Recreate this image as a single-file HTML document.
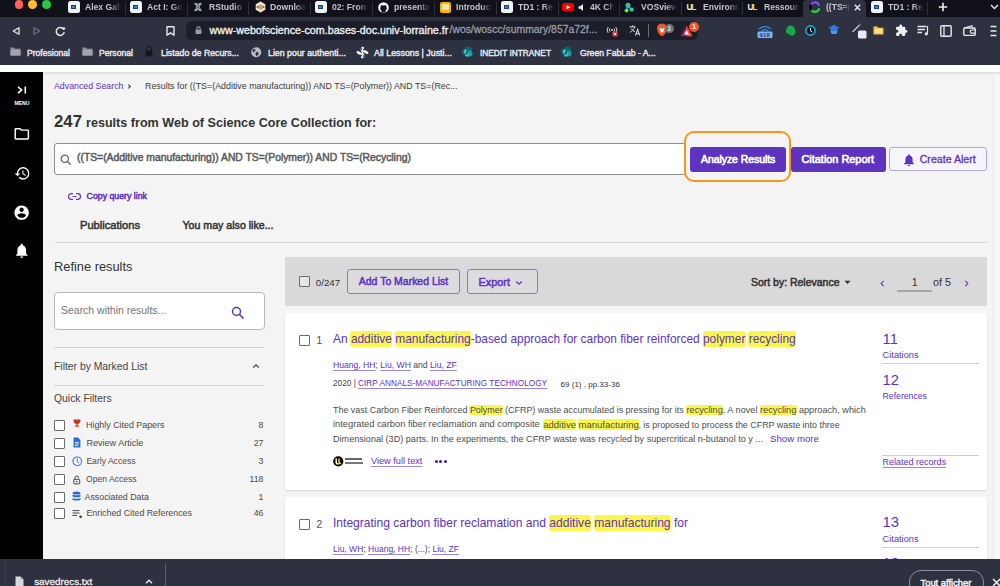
<!DOCTYPE html>
<html><head><meta charset="utf-8"><style>
*{margin:0;padding:0;box-sizing:border-box}
html,body{width:1000px;height:586px;overflow:hidden;background:#f4f4f4;font-family:"Liberation Sans",sans-serif;position:relative}
.a{position:absolute}
svg.a{overflow:visible}
.t{position:absolute;white-space:nowrap;line-height:1}
.b{font-weight:700}
.sb{-webkit-text-stroke:0.5px currentColor}
.pu{color:#5e33bf}
.hl{background:#fbf64c;border-radius:3px;padding:1px 0.5px;margin:0 -0.5px}
.hl2{background:#fbf64c;border-radius:2px;padding:0 0.5px;margin:0 -0.5px}
.u{text-decoration:underline;text-decoration-thickness:0.7px;text-underline-offset:1.6px;text-decoration-color:#9b86dc;color:#5e33bf}
.ab{color:#4d4d4d}
.tabt{position:absolute;white-space:nowrap;line-height:1;overflow:hidden;font-weight:700;color:#c4c5cc;-webkit-mask-image:linear-gradient(90deg,#000 70%,transparent 100%)}
</style></head><body>
<div class="a" style="left:0px;top:0px;width:1000px;height:17px;background:#101119"></div>
<div class="a" style="left:0px;top:17px;width:1000px;height:48px;background:#2e3140"></div>
<div class="a" style="left:186px;top:20.5px;width:512px;height:19px;background:#1c1e29;border-radius:5px"></div>
<div class="a" style="left:0px;top:65px;width:1000px;height:7px;background:#fff"></div>
<div class="a" style="left:0px;top:72px;width:1000px;height:487px;background:#f4f4f4"></div>
<div class="a" style="left:0px;top:72px;width:43px;height:487px;background:#000"></div>
<div class="a" style="left:43px;top:72px;width:957px;height:3px;background:linear-gradient(#dcdcdc,#f4f4f4)"></div>
<div class="a" style="left:993px;top:75px;width:7px;height:484px;background:#f7f7f7;border-left:1px solid #e9e9e9"></div>
<div class="a" style="left:14.499999999999998px;top:0.2px;width:8.8px;height:8.8px;border-radius:50%;background:#fe5f57"></div>
<div class="a" style="left:28.300000000000004px;top:0.2px;width:8.8px;height:8.8px;border-radius:50%;background:#febc2e"></div>
<div class="a" style="left:42.4px;top:0.2px;width:8.8px;height:8.8px;border-radius:50%;background:#28c840"></div>
<div class="a" style="left:125px;top:2px;width:1px;height:13px;background:#2f3038"></div>
<div class="a" style="left:187px;top:2px;width:1px;height:13px;background:#2f3038"></div>
<div class="a" style="left:248px;top:2px;width:1px;height:13px;background:#2f3038"></div>
<div class="a" style="left:310px;top:2px;width:1px;height:13px;background:#2f3038"></div>
<div class="a" style="left:372px;top:2px;width:1px;height:13px;background:#2f3038"></div>
<div class="a" style="left:434px;top:2px;width:1px;height:13px;background:#2f3038"></div>
<div class="a" style="left:496px;top:2px;width:1px;height:13px;background:#2f3038"></div>
<div class="a" style="left:558px;top:2px;width:1px;height:13px;background:#2f3038"></div>
<div class="a" style="left:619px;top:2px;width:1px;height:13px;background:#2f3038"></div>
<div class="a" style="left:681px;top:2px;width:1px;height:13px;background:#2f3038"></div>
<div class="a" style="left:742px;top:2px;width:1px;height:13px;background:#2f3038"></div>
<div class="a" style="left:927px;top:2px;width:1px;height:13px;background:#2f3038"></div>
<div class="a" style="left:803px;top:0px;width:63px;height:17px;background:#2e3140;border-radius:4px 4px 0 0"></div>
<div class="tabt" style="left:85px;top:2px;width:36px;height:12px;font-size:8.6px;padding-top:1.2px">Alex Gabriel</div>
<div class="tabt" style="left:147px;top:2px;width:36px;height:12px;font-size:8.6px;padding-top:1.2px">Act I: Goals</div>
<div class="tabt" style="left:209px;top:2px;width:36px;height:12px;font-size:8.6px;padding-top:1.2px">RStudio Server</div>
<div class="tabt" style="left:270px;top:2px;width:36px;height:12px;font-size:8.6px;padding-top:1.2px">Download</div>
<div class="tabt" style="left:332px;top:2px;width:36px;height:12px;font-size:8.6px;padding-top:1.2px">02: From</div>
<div class="tabt" style="left:394px;top:2px;width:36px;height:12px;font-size:8.6px;padding-top:1.2px">presentation</div>
<div class="tabt" style="left:456px;top:2px;width:36px;height:12px;font-size:8.6px;padding-top:1.2px">Introduction</div>
<div class="tabt" style="left:518px;top:2px;width:36px;height:12px;font-size:8.6px;padding-top:1.2px">TD1 : Ressources</div>
<div class="tabt" style="left:590px;top:2px;width:24px;height:12px;font-size:8.6px;padding-top:1.2px">4K Chill</div>
<div class="tabt" style="left:641px;top:2px;width:36px;height:12px;font-size:8.6px;padding-top:1.2px">VOSviewer</div>
<div class="tabt" style="left:703px;top:2px;width:36px;height:12px;font-size:8.6px;padding-top:1.2px">Environnement</div>
<div class="tabt" style="left:764px;top:2px;width:36px;height:12px;font-size:8.6px;padding-top:1.2px">Ressources</div>
<div class="tabt" style="left:826px;top:2px;width:24px;height:12px;font-size:8.6px;padding-top:1.2px">((TS=(Additive</div>
<div class="tabt" style="left:888px;top:2px;width:36px;height:12px;font-size:8.6px;padding-top:1.2px">TD1 : Ressources</div>
<div class="a" style="left:68px;top:1.2px;width:11.5px;height:11.5px;background:#f2f2f2;border-radius:2.5px"></div>
<div class="a" style="left:71.2px;top:5.2px;width:5px;height:3.6px;background:#2f86d6;border:0.8px solid #1a3f80"></div>
<div class="a" style="left:130px;top:1.2px;width:11.5px;height:11.5px;background:#f2f2f2;border-radius:2.5px"></div>
<div class="a" style="left:133.2px;top:5.2px;width:5px;height:3.6px;background:#2f86d6;border:0.8px solid #1a3f80"></div>
<div class="a" style="left:315px;top:1.2px;width:11.5px;height:11.5px;background:#f2f2f2;border-radius:2.5px"></div>
<div class="a" style="left:318.2px;top:5.2px;width:5px;height:3.6px;background:#2f86d6;border:0.8px solid #1a3f80"></div>
<div class="a" style="left:501px;top:1.2px;width:11.5px;height:11.5px;background:#f2f2f2;border-radius:2.5px"></div>
<div class="a" style="left:504.2px;top:5.2px;width:5px;height:3.6px;background:#2f86d6;border:0.8px solid #1a3f80"></div>
<div class="a" style="left:871px;top:1.2px;width:11.5px;height:11.5px;background:#f2f2f2;border-radius:2.5px"></div>
<div class="a" style="left:874.2px;top:5.2px;width:5px;height:3.6px;background:#2f86d6;border:0.8px solid #1a3f80"></div>
<svg class="a" style="left:193px;top:2px" width="10" height="10" viewBox="0 0 10 10"><path d="M1 1 L4 1 L5 3 L6 1 L9 1 L6.6 5 L9 9 L6 9 L5 7 L4 9 L1 9 L3.4 5 Z" fill="#a4a9b3"/><path d="M3 3 L7 7 M7 3 L3 7" stroke="#5d616b" stroke-width="0.8"/></svg>
<svg class="a" style="left:254.5px;top:1px" width="11" height="12" viewBox="0 0 11 12"><path d="M5.5 0.5 L10.3 3.2 V8.8 L5.5 11.5 L0.7 8.8 V3.2 Z" fill="#eee6d6"/><circle cx="5.5" cy="6" r="2.6" fill="#c9a46e"/><circle cx="2.5" cy="6" r="1" fill="#a04b4b"/><circle cx="8.5" cy="6" r="1" fill="#a04b4b"/></svg>
<svg class="a" style="left:378px;top:1.5px" width="11" height="11" viewBox="0 0 11 11"><circle cx="5.5" cy="5.5" r="5.3" fill="#f4f4f4"/><path d="M3.4 10.6 V8.4 C2.4 8 2.2 7 2.3 6 C2.3 5.2 2.7 4.8 2.9 4.6 C2.8 4.2 2.8 3.6 3 3 C3.6 3 4.2 3.4 4.5 3.6 C5.2 3.4 5.8 3.4 6.5 3.6 C6.8 3.4 7.4 3 8 3 C8.2 3.6 8.2 4.2 8.1 4.6 C8.3 4.8 8.7 5.2 8.7 6 C8.8 7 8.6 8 7.6 8.4 V10.6 Z" fill="#101119"/></svg>
<div class="a" style="left:439.5px;top:1.5px;width:11.5px;height:11px;background:#f5b400;border-radius:2px"></div>
<div class="a" style="left:441.6px;top:3.8px;width:7.3px;height:5.8px;background:#fde8a8"></div>
<div class="a" style="left:561.6px;top:3px;width:12.3px;height:8px;background:#f00;border-radius:2.5px"></div>
<svg class="a" style="left:565.8px;top:4.8px" width="5" height="5" viewBox="0 0 5 5"><path d="M0.5 0.3 L4.5 2.2 L0.5 4.2 Z" fill="#fff"/></svg>
<svg class="a" style="left:578px;top:4px" width="8" height="7" viewBox="0 0 8 7"><path d="M0.5 2.2 H2.2 L5 0 V7 L2.2 4.8 H0.5 Z" fill="#e8e8e8"/><path d="M6.3 2 L7.8 3.5 M7.8 2 L6.3 3.5" stroke="none"/></svg>
<svg class="a" style="left:624px;top:1.5px" width="10" height="11" viewBox="0 0 10 11"><circle cx="4" cy="3.2" r="2.5" fill="#19d3c5"/><circle cx="4" cy="3.2" r="1.2" fill="#ff6a00"/><circle cx="2.6" cy="8.5" r="2.1" fill="#25c9a0"/><circle cx="2.6" cy="8.5" r="1.1" fill="#f2f200"/><circle cx="7.6" cy="7.6" r="2" fill="#28d3a8"/><path d="M4 4 L2.6 8 M4 4 L7.4 7.4" stroke="#1cc7b8" stroke-width="1.4"/></svg>
<div class="t b" style="left:686.5px;top:3px;font-size:8.4px;letter-spacing:-1.3px;color:#f4f1e0">U<span style="color:#f6e21c">L</span></div>
<div class="t b" style="left:747.5px;top:3px;font-size:8.4px;letter-spacing:-1.3px;color:#f4f1e0">U<span style="color:#f6e21c">L</span></div>
<svg class="a" style="left:808.5px;top:1.2px" width="12" height="12" viewBox="0 0 12 12"><path d="M3 2.6 A4.4 4.4 0 0 1 9.8 3.6" fill="none" stroke="#7a4bff" stroke-width="2.4" stroke-linecap="round"/><path d="M10 8.2 A4.4 4.4 0 0 1 3.4 10" fill="none" stroke="#2ecc40" stroke-width="2.4" stroke-linecap="round"/><path d="M1.6 4.5 V8" stroke="#000" stroke-width="2.2" stroke-linecap="round"/></svg>
<svg class="a" style="left:853.5px;top:4px" width="7" height="7" viewBox="0 0 7 7"><path d="M0.8 0.8 L6.2 6.2 M6.2 0.8 L0.8 6.2" stroke="#e4e4e8" stroke-width="1.5"/></svg>
<svg class="a" style="left:938px;top:2px" width="10" height="10" viewBox="0 0 10 10"><path d="M5 0.8 V9.2 M0.8 5 H9.2" stroke="#f0f0f0" stroke-width="1.6"/></svg>
<svg class="a" style="left:990px;top:3.5px" width="9" height="6" viewBox="0 0 9 6"><path d="M1 1 L4.5 4.6 L8 1" fill="none" stroke="#e8e8e8" stroke-width="1.4"/></svg>
<svg class="a" style="left:11.5px;top:26.5px" width="8" height="8" viewBox="0 0 8 8"><path d="M7 0.8 V7.2 L1.2 4 Z" fill="none" stroke="#e6e6ea" stroke-width="1.3" stroke-linejoin="round"/></svg>
<svg class="a" style="left:33px;top:26.5px" width="8" height="8" viewBox="0 0 8 8"><path d="M1 0.8 V7.2 L6.8 4 Z" fill="none" stroke="#6b6e7a" stroke-width="1.3" stroke-linejoin="round"/></svg>
<svg class="a" style="left:55px;top:26px" width="11" height="10" viewBox="0 0 11 10"><path d="M8.6 3.2 A4 4 0 1 0 9.2 6" fill="none" stroke="#e6e6ea" stroke-width="1.5"/><circle cx="8.8" cy="2.6" r="1.4" fill="#e6e6ea"/></svg>
<svg class="a" style="left:166px;top:26px" width="9" height="10" viewBox="0 0 9 10"><path d="M1 0.8 H8 V9.2 L4.5 6.8 L1 9.2 Z" fill="none" stroke="#e6e6ea" stroke-width="1.4" stroke-linejoin="round"/></svg>
<svg class="a" style="left:194.5px;top:26px" width="7" height="8" viewBox="0 0 7 8"><path d="M1.8 3.6 V2.6 A1.7 1.7 0 0 1 5.2 2.6 V3.6" fill="none" stroke="#9a9ca6" stroke-width="1.1"/><rect x="0.5" y="3.6" width="6" height="4.3" rx="0.8" fill="#9a9ca6"/></svg>
<div class="t sb" style="left:209.5px;top:24.94px;font-size:10.7px;color:#eeeef0;-webkit-text-stroke:0.35px #eeeef0">www-webofscience-com.bases-doc.univ-lorraine.fr</div>
<div class="t " style="left:449.5px;top:25.20px;font-size:10.4px;color:#9a9ca6;-webkit-text-stroke:0.3px #9a9ca6">/wos/woscc/summary/857a72f...</div>
<svg class="a" style="left:606px;top:25px" width="12" height="12" viewBox="0 0 12 12"><path d="M2.2 8 A5 5 0 0 1 2.2 2 M4 6.6 A2.6 2.6 0 0 1 4 3.4 M9.8 2 A5 5 0 0 1 9.8 8 M8 3.4 A2.6 2.6 0 0 1 8 6.6" fill="none" stroke="#d0d0d6" stroke-width="1"/><circle cx="6" cy="5" r="1" fill="#d0d0d6"/><rect x="6.5" y="6.5" width="5" height="5" rx="1" fill="#e0443a"/><path d="M7.8 7.8 L10.2 10.2 M10.2 7.8 L7.8 10.2" stroke="#fff" stroke-width="0.8"/></svg>
<svg class="a" style="left:628.5px;top:25px" width="12" height="11" viewBox="0 0 12 11"><path d="M0.5 1.8 H6.5 M3.5 0.4 V1.8 M5.6 1.8 C5 4.2 3.2 6.2 0.8 7.4 M2 3.4 C3 5 4.4 6.2 6 6.8" fill="none" stroke="#d8d8dc" stroke-width="1"/><path d="M6.4 10.6 L8.6 4.4 L10.8 10.6 M7.2 8.6 H10" fill="none" stroke="#d8d8dc" stroke-width="1.1"/></svg>
<div class="a" style="left:647.5px;top:24px;width:1.2px;height:13px;background:#6c6e78"></div>
<svg class="a" style="left:656px;top:23px" width="12" height="14" viewBox="0 0 12 14"><path d="M1.5 2.5 L4 0.8 H8 L10.5 2.5 L11 5 C11 9 8.5 12 6 13.2 C3.5 12 1 9 1 5 Z" fill="#f0582a"/><path d="M3.5 4.5 L6 6 L8.5 4.5 L7.5 8.5 L6 9.8 L4.5 8.5 Z" fill="#fff"/></svg>
<div class="a" style="left:665px;top:24px;width:8.5px;height:8.5px;border-radius:50%;background:#6c6e78"></div>
<div class="t b" style="left:667.3px;top:25.50px;font-size:6.5px;color:#ddd;">3</div>
<svg class="a" style="left:680px;top:25px" width="13" height="12" viewBox="0 0 13 12"><path d="M6.5 0.5 L12.5 11.2 H0.5 Z" fill="#9e1f63"/><path d="M6.5 0.5 L12.5 11.2 H6.5 Z" fill="#ff4724"/><path d="M6.5 5 L9 9.5 H4 Z" fill="#fff"/></svg>
<div class="a" style="left:689px;top:21.5px;width:10px;height:10px;border-radius:50%;background:#f0582a"></div>
<div class="t b" style="left:692.3px;top:24.00px;font-size:6.5px;color:#fff;">1</div>
<svg class="a" style="left:757px;top:23px" width="16" height="15" viewBox="0 0 16 15"><path d="M2 6 A9 9 0 0 1 14 6 M4.5 8 A5.5 5.5 0 0 1 11.5 8" fill="none" stroke="#2b8de3" stroke-width="1.3"/><rect x="0.5" y="8.5" width="15" height="6.5" rx="1.2" fill="#7fb6f5"/></svg>
<div class="t b" style="left:759.5px;top:31.75px;font-size:6.2px;color:#1f3f77;">918</div>
<svg class="a" style="left:785px;top:25px" width="11" height="11" viewBox="0 0 11 11"><path d="M2 3 C2 1.5 3.5 0.5 5 0.5 C8 0.5 10.5 3 10.5 6.5 C10.5 9.5 8.5 10.8 6.5 10.8 C5.5 10.8 5.8 9.5 4.5 9.5 C2.5 9.5 0.8 7.5 0.8 5.5 Z" fill="#1aa64a"/></svg>
<svg class="a" style="left:805px;top:25px" width="11" height="11" viewBox="0 0 11 11"><circle cx="5.5" cy="5.5" r="4.6" fill="#111" stroke="#19a8e0" stroke-width="1.6"/><path d="M5.5 3 V5.8 L7.4 7.2" fill="none" stroke="#fff" stroke-width="1"/></svg>
<svg class="a" style="left:828px;top:24px" width="12" height="12" viewBox="0 0 12 12"><path d="M6 0.8 L11.5 4 L6 7.2 L0.5 4 Z" fill="#2b7be6"/><path d="M2.8 5.5 V8.5 C2.8 10.5 9.2 10.5 9.2 8.5 V5.5 L6 7.2 Z" fill="#4b9af5"/></svg>
<svg class="a" style="left:851px;top:23px" width="16" height="16" viewBox="0 0 16 16"><path d="M1.5 9 L8.5 2" stroke="#c8c8cc" stroke-width="1.2"/><path d="M8.5 2 L9.8 0.8" stroke="#777" stroke-width="1.5"/><rect x="7" y="7.5" width="8.5" height="8" rx="1.5" fill="#e9ebf3"/></svg>
<svg class="a" style="left:873px;top:25px" width="11" height="10" viewBox="0 0 11 10"><path d="M0.5 1.5 H4.2 L5.2 2.8 H10.5 V9.5 H0.5 Z" fill="#f6c34a"/><rect x="2" y="4" width="7" height="4" fill="#fde29a"/></svg>
<svg class="a" style="left:895px;top:23.5px" width="13" height="13" viewBox="0 0 24 24"><path d="M20.5 11H19V7c0-1.1-.9-2-2-2h-4V3.5C13 2.12 11.88 1 10.5 1S8 2.12 8 3.5V5H4c-1.1 0-1.99.9-1.99 2v3.8H3.5c1.490 0 2.7 1.21 2.7 2.7s-1.21 2.7-2.7 2.7H2V20c0 1.1.9 2 2 2h3.8v-1.5c0-1.49 1.21-2.7 2.7-2.7 1.49 0 2.7 1.21 2.7 2.7V22H17c1.1 0 2-.9 2-2v-4h1.5c1.38 0 2.5-1.12 2.5-2.5S21.88 11 20.5 11z" fill="#f0f0f2"/></svg>
<svg class="a" style="left:917px;top:25px" width="13" height="11" viewBox="0 0 13 11"><path d="M0.5 1.5 H9.5 M0.5 4.5 H8 M0.5 7.5 H5" stroke="#e8e8ec" stroke-width="1.3"/><path d="M10.5 1 V8.5" stroke="#e8e8ec" stroke-width="1.2"/><circle cx="9.3" cy="8.8" r="1.6" fill="#e8e8ec"/></svg>
<svg class="a" style="left:940px;top:24.5px" width="12" height="12" viewBox="0 0 12 12"><rect x="0.8" y="0.8" width="10.4" height="10.4" rx="1" fill="none" stroke="#e8e8ec" stroke-width="1.4"/><path d="M4 0.8 V11.2" stroke="#e8e8ec" stroke-width="1.3"/></svg>
<svg class="a" style="left:963px;top:25px" width="13" height="11" viewBox="0 0 13 11"><path d="M1 3 L9 0.8 V3" fill="none" stroke="#e8e8ec" stroke-width="1.1"/><rect x="0.8" y="3" width="11.4" height="7.4" rx="1.2" fill="none" stroke="#e8e8ec" stroke-width="1.4"/><path d="M12 5 H8.8 A1.6 1.6 0 0 0 8.8 8.2 H12" fill="none" stroke="#e8e8ec" stroke-width="1.2"/></svg>
<svg class="a" style="left:990px;top:24.5px" width="7" height="12" viewBox="0 0 7 12"><path d="M0.5 1.5 H6.5 M0.5 6 H6.5 M0.5 10.5 H6.5" stroke="#e8e8ec" stroke-width="1.4"/></svg>
<svg class="a" style="left:10px;top:47px" width="11" height="9" viewBox="0 0 11 9"><path d="M0.5 0.5 H4 L5 1.8 H10.5 V8.5 H0.5 Z" fill="#8e9098"/><path d="M0.5 2.8 H10.5 V8.5 H0.5 Z" fill="#a3a5ad"/></svg>
<svg class="a" style="left:82px;top:47px" width="11" height="9" viewBox="0 0 11 9"><path d="M0.5 0.5 H4 L5 1.8 H10.5 V8.5 H0.5 Z" fill="#8e9098"/><path d="M0.5 2.8 H10.5 V8.5 H0.5 Z" fill="#a3a5ad"/></svg>
<div class="t sb" style="left:27px;top:48.73px;font-size:8.59px;color:#e4e4e8;-webkit-text-stroke:0.4px #ececf0">Profesional</div>
<div class="t sb" style="left:99px;top:48.71px;font-size:8.61px;color:#e4e4e8;-webkit-text-stroke:0.4px #ececf0">Personal</div>
<svg class="a" style="left:144.5px;top:46px" width="8" height="11" viewBox="0 0 8 11"><path d="M1.5 4.5 V3 A2.5 2.5 0 0 1 6.5 3 V4.5" fill="none" stroke="#15161c" stroke-width="1"/><rect x="0.5" y="4.5" width="7" height="6" rx="1.5" fill="#15161c"/></svg>
<div class="t sb" style="left:161px;top:48.58px;font-size:8.77px;color:#e4e4e8;-webkit-text-stroke:0.4px #ececf0">Listado de Recurs...</div>
<svg class="a" style="left:251px;top:47px" width="10.5" height="10.5" viewBox="0 0 10.5 10.5"><circle cx="5.25" cy="5.25" r="5" fill="#b9bbc2"/><path d="M2.2 2.2 C3.5 1.6 4.6 2.2 4.4 3.4 C4.2 4.4 2.8 4.6 2.2 5.6 C1.6 4.6 1.4 3.2 2.2 2.2 Z M5.6 5 C6.8 4.8 8 5.6 7.6 7 C7.2 8.2 6 8.6 5.2 9.4 C5.2 8.2 4.4 7.6 4.6 6.6 C4.7 5.8 5 5.1 5.6 5 Z" fill="#2e3140"/></svg>
<div class="t sb" style="left:268px;top:48.53px;font-size:8.82px;color:#e4e4e8;-webkit-text-stroke:0.4px #ececf0">Lien pour authenti...</div>
<svg class="a" style="left:357px;top:46.5px" width="11" height="11" viewBox="0 0 11 11"><g transform="rotate(0 5.5 5.5)"><path d="M5.5 5.5 Q3.2 3.6 5.8 0.9" fill="none" stroke="#f4f4f6" stroke-width="2.6" stroke-linecap="round"/></g><g transform="rotate(90 5.5 5.5)"><path d="M5.5 5.5 Q3.2 3.6 5.8 0.9" fill="none" stroke="#f4f4f6" stroke-width="2.6" stroke-linecap="round"/></g><g transform="rotate(180 5.5 5.5)"><path d="M5.5 5.5 Q3.2 3.6 5.8 0.9" fill="none" stroke="#f4f4f6" stroke-width="2.6" stroke-linecap="round"/></g><g transform="rotate(270 5.5 5.5)"><path d="M5.5 5.5 Q3.2 3.6 5.8 0.9" fill="none" stroke="#f4f4f6" stroke-width="2.6" stroke-linecap="round"/></g><path d="M5.5 5.5 Q3.2 3.6 5.8 0.9" fill="none" stroke="#000" stroke-width="0.9" transform="rotate(0 5.5 5.5) translate(-1 0.3)"/><path d="M5.5 5.5 Q3.2 3.6 5.8 0.9" fill="none" stroke="#000" stroke-width="0.9" transform="rotate(180 5.5 5.5) translate(-1 0.3)"/></svg>
<div class="t sb" style="left:374px;top:48.52px;font-size:8.84px;color:#e4e4e8;-webkit-text-stroke:0.4px #ececf0">All Lessons | Justi...</div>
<svg class="a" style="left:462px;top:46px" width="11" height="11" viewBox="0 0 11 11"><circle cx="6.5" cy="4" r="3.5" fill="#036c70"/><circle cx="7.5" cy="7.5" r="3" fill="#1a9ba1"/><circle cx="5" cy="8.5" r="2.2" fill="#37c6d0"/><rect x="0.5" y="3" width="5.5" height="5.5" rx="0.8" fill="#03787c"/><path d="M4.3 4.3 C3.2 3.8 2.2 4.5 3 5.4 C3.8 6 3.6 7 2.2 6.8" fill="none" stroke="#fff" stroke-width="0.8"/></svg>
<svg class="a" style="left:561px;top:46px" width="11" height="11" viewBox="0 0 11 11"><circle cx="6.5" cy="4" r="3.5" fill="#036c70"/><circle cx="7.5" cy="7.5" r="3" fill="#1a9ba1"/><circle cx="5" cy="8.5" r="2.2" fill="#37c6d0"/><rect x="0.5" y="3" width="5.5" height="5.5" rx="0.8" fill="#03787c"/><path d="M4.3 4.3 C3.2 3.8 2.2 4.5 3 5.4 C3.8 6 3.6 7 2.2 6.8" fill="none" stroke="#fff" stroke-width="0.8"/></svg>
<div class="t sb" style="left:480px;top:48.96px;font-size:8.32px;color:#e4e4e8;-webkit-text-stroke:0.4px #ececf0">INEDIT INTRANET</div>
<div class="t sb" style="left:580px;top:48.68px;font-size:8.65px;color:#e4e4e8;-webkit-text-stroke:0.4px #ececf0">Green FabLab - A...</div>
<div class="t pu" style="left:54px;top:81.95px;font-size:8.8px;">Advanced Search</div>
<svg class="a" style="left:127px;top:83.5px" width="5" height="5" viewBox="0 0 5 5"><path d="M1.2 0.6 L3.4 2.5 L1.2 4.4" fill="none" stroke="#444" stroke-width="1.1"/></svg>
<div class="t " style="left:145px;top:81.89px;font-size:8.87px;color:#3c3c3c;">Results for ((TS=(Additive manufacturing)) AND TS=(Polymer)) AND TS=(Rec...</div>
<div class="t b" style="left:54px;top:113.78px;font-size:16.8px;color:#333;">247</div>
<div class="t b" style="left:86px;top:116.53px;font-size:12.6px;color:#333;">results from Web of Science Core Collection for:</div>
<div class="a" style="left:54px;top:143px;width:632px;height:32px;background:#fff;border:1px solid #8f8f8f;border-radius:3px"></div>
<svg class="a" style="left:60px;top:154px" width="12" height="12" viewBox="0 0 12 12"><circle cx="4.8" cy="4.8" r="3.6" fill="none" stroke="#666" stroke-width="1.3"/><path d="M7.5 7.5 L10.8 10.8" stroke="#666" stroke-width="1.4"/></svg>
<div class="t sb" style="left:77px;top:152.64px;font-size:10.35px;color:#5b5b5b;">((TS=(Additive manufacturing)) AND TS=(Polymer)) AND TS=(Recycling)</div>
<div class="a" style="left:690px;top:147px;width:96px;height:25px;background:#5e33bf;border-radius:3px"></div>
<div class="t sb" style="left:701px;top:155.43px;font-size:10.36px;color:#fff;-webkit-text-stroke:0.65px #fff">Analyze Results</div>
<div class="a" style="left:791px;top:147px;width:95px;height:24.5px;background:#5e33bf;border-radius:3px"></div>
<div class="t sb" style="left:801.5px;top:154.37px;font-size:10.9px;color:#fff;-webkit-text-stroke:0.65px #fff">Citation Report</div>
<div class="a" style="left:889.4px;top:146.9px;width:97.4px;height:24.2px;background:#f6f5fa;border:1px solid #b3a7dd;border-radius:3px"></div>
<svg class="a" style="left:903px;top:153px" width="12" height="14" viewBox="0 0 13 15"><path d="M6.5 1.2 C6 1.2 5.6 1.6 5.6 2.1 L5.6 2.6 C3.6 3.1 2.6 4.8 2.6 6.8 L2.6 10 L1.2 11.4 L1.2 12.1 L11.8 12.1 L11.8 11.4 L10.4 10 L10.4 6.8 C10.4 4.8 9.4 3.1 7.4 2.6 L7.4 2.1 C7.4 1.6 7 1.2 6.5 1.2 Z M5.2 12.9 C5.2 13.6 5.8 14.2 6.5 14.2 C7.2 14.2 7.8 13.6 7.8 12.9 Z" fill="#5e33bf"/></svg>
<div class="t pu sb" style="left:919.7px;top:153.82px;font-size:10.61px;-webkit-text-stroke:0.3px #5e33bf">Create Alert</div>
<div class="a" style="left:683.5px;top:131.3px;width:107.2px;height:51.2px;border:2.8px solid #f8961c;border-radius:10px"></div>
<svg class="a" style="left:68.3px;top:192.6px" width="13" height="7" viewBox="0 0 13 7"><path d="M5 0.6 H3.4 A2.9 2.9 0 0 0 3.4 6.4 H5 M8 0.6 H9.6 A2.9 2.9 0 0 1 9.6 6.4 H8 M4.6 3.5 H8.4" fill="none" stroke="#5e33bf" stroke-width="1.15"/></svg>
<div class="t pu sb" style="left:86.6px;top:191.78px;font-size:8.76px;">Copy query link</div>
<div class="t sb" style="left:80px;top:219.58px;font-size:11.13px;color:#333;">Publications</div>
<div class="t sb" style="left:182.5px;top:220.02px;font-size:10.61px;color:#333;">You may also like...</div>
<div class="a" style="left:55px;top:242px;width:932px;height:1px;background:#d6d6d6"></div>
<div class="t " style="left:54px;top:261.38px;font-size:12.84px;color:#333;">Refine results</div>
<div class="a" style="left:53.5px;top:292px;width:211px;height:37.5px;background:#fff;border:1px solid #b8b8b8;border-radius:4px"></div>
<div class="t " style="left:61px;top:306.43px;font-size:10.48px;color:#757575;">Search within results...</div>
<svg class="a" style="left:231px;top:306px" width="14" height="14" viewBox="0 0 14 14"><circle cx="5.5" cy="5.5" r="4" fill="none" stroke="#5e33bf" stroke-width="1.5"/><path d="M8.5 8.5 L12.5 12.5" stroke="#5e33bf" stroke-width="1.6"/></svg>
<div class="a" style="left:54px;top:347px;width:210px;height:1px;background:#d3d3d3"></div>
<div class="t " style="left:54px;top:361.73px;font-size:10.36px;color:#444;">Filter by Marked List</div>
<svg class="a" style="left:252px;top:363px" width="8" height="6" viewBox="0 0 8 6"><path d="M1.2 4.5 L4 1.8 L6.8 4.5" fill="none" stroke="#444" stroke-width="1.2"/></svg>
<div class="a" style="left:54px;top:385px;width:210px;height:1px;background:#d3d3d3"></div>
<div class="t " style="left:54px;top:394.01px;font-size:10.38px;color:#444;">Quick Filters</div>
<div class="a" style="left:54px;top:420.2px;width:11px;height:11px;border:1.2px solid #6b6b6b;border-radius:1px;background:#fff"></div>
<div class="t " style="left:86px;top:421.18px;font-size:8.88px;color:#4a4a4a;">Highly Cited Papers</div>
<div class="t " style="right:736.5px;top:421.25px;font-size:8.8px;color:#4a4a4a;">8</div>
<div class="a" style="left:54px;top:438.1px;width:11px;height:11px;border:1.2px solid #6b6b6b;border-radius:1px;background:#fff"></div>
<div class="t " style="left:86.4px;top:438.91px;font-size:9.08px;color:#4a4a4a;">Review Article</div>
<div class="t " style="right:736.5px;top:439.15px;font-size:8.8px;color:#4a4a4a;">27</div>
<div class="a" style="left:54px;top:455.8px;width:11px;height:11px;border:1.2px solid #6b6b6b;border-radius:1px;background:#fff"></div>
<div class="t " style="left:86.4px;top:457.02px;font-size:8.6px;color:#4a4a4a;">Early Access</div>
<div class="t " style="right:736.5px;top:456.85px;font-size:8.8px;color:#4a4a4a;">3</div>
<div class="a" style="left:54px;top:473.8px;width:11px;height:11px;border:1.2px solid #6b6b6b;border-radius:1px;background:#fff"></div>
<div class="t " style="left:86px;top:475.02px;font-size:8.6px;color:#4a4a4a;">Open Access</div>
<div class="t " style="right:736.5px;top:474.85px;font-size:8.8px;color:#4a4a4a;">118</div>
<div class="a" style="left:54px;top:491.7px;width:11px;height:11px;border:1.2px solid #6b6b6b;border-radius:1px;background:#fff"></div>
<div class="t " style="left:84.5px;top:492.70px;font-size:8.86px;color:#4a4a4a;">Associated Data</div>
<div class="t " style="right:736.5px;top:492.75px;font-size:8.8px;color:#4a4a4a;">1</div>
<div class="a" style="left:54px;top:508.2px;width:11px;height:11px;border:1.2px solid #6b6b6b;border-radius:1px;background:#fff"></div>
<div class="t " style="left:86.4px;top:509.22px;font-size:8.84px;color:#4a4a4a;">Enriched Cited References</div>
<div class="t " style="right:736.5px;top:509.25px;font-size:8.8px;color:#4a4a4a;">46</div>
<svg class="a" style="left:72.5px;top:418.5px" width="8" height="9" viewBox="0 0 8 9"><path d="M0.6 0.6 H7.4 V1.8 C7.4 3.8 5.8 4.8 4.6 5 V6.4 H5.8 V7.8 H2.2 V6.4 H3.4 V5 C2.2 4.8 0.6 3.8 0.6 1.8 Z" fill="#c8321f"/></svg>
<svg class="a" style="left:72.5px;top:436.5px" width="8" height="11" viewBox="0 0 8 11"><path d="M0.6 0.6 H5 L7.4 3 V10.4 H0.6 Z" fill="#2a6bd6"/><path d="M2 5.4 H6 M2 7 H6 M2 8.6 H5" stroke="#fff" stroke-width="0.8"/></svg>
<svg class="a" style="left:72px;top:455.5px" width="10.5" height="10.5" viewBox="0 0 10.5 10.5"><circle cx="5.25" cy="5.25" r="4.3" fill="none" stroke="#3f7ad9" stroke-width="1.1"/><path d="M5.25 2.6 V5.5 L7 6.8" fill="none" stroke="#3f7ad9" stroke-width="1"/></svg>
<svg class="a" style="left:73px;top:474.5px" width="7.5" height="9.5" viewBox="0 0 7.5 9.5"><path d="M1.9 4.3 V2.9 A1.85 1.85 0 0 1 5.6 2.9 V3.2" fill="none" stroke="#444" stroke-width="1"/><rect x="0.8" y="4.3" width="5.9" height="4.6" rx="0.5" fill="none" stroke="#444" stroke-width="1"/><circle cx="3.75" cy="6.6" r="0.8" fill="#444"/></svg>
<svg class="a" style="left:72px;top:490.5px" width="9" height="10.5" viewBox="0 0 9 10.5"><ellipse cx="4.5" cy="2" rx="4" ry="1.6" fill="#2a6bd6"/><path d="M0.5 3.3 C0.5 4.6 8.5 4.6 8.5 3.3 V5.2 C8.5 6.5 0.5 6.5 0.5 5.2 Z M0.5 6.7 C0.5 8 8.5 8 8.5 6.7 V8.5 C8.5 9.9 0.5 9.9 0.5 8.5 Z" fill="#2a6bd6"/></svg>
<svg class="a" style="left:72px;top:508.5px" width="11" height="10" viewBox="0 0 11 10"><path d="M0.5 1.6 H7.5 M0.5 4 H7.5 M0.5 6.4 H5" stroke="#444" stroke-width="1"/><circle cx="8.6" cy="7.8" r="1.3" fill="#333"/></svg>
<div class="a" style="left:285px;top:257px;width:702px;height:49px;background:#d9d9d9"></div>
<div class="a" style="left:299px;top:276px;width:11px;height:11px;border:1.2px solid #6b6b6b;border-radius:1px;background:#e6e6e6"></div>
<div class="t " style="left:315.8px;top:277.55px;font-size:9.75px;color:#333;">0/247</div>
<div class="a" style="left:347px;top:269px;width:113px;height:25px;background:#dcdcdf;border:1px solid #8d77d4;border-radius:3px"></div>
<div class="t pu sb" style="left:358.8px;top:277.44px;font-size:10.47px;">Add To Marked List</div>
<div class="a" style="left:467px;top:269px;width:71px;height:25px;background:#dcdcdf;border:1px solid #8d77d4;border-radius:3px"></div>
<div class="t pu sb" style="left:478.5px;top:277.07px;font-size:10.9px;">Export</div>
<svg class="a" style="left:515px;top:280px" width="8" height="6" viewBox="0 0 8 6"><path d="M1.2 1.5 L4 4.2 L6.8 1.5" fill="none" stroke="#5e33bf" stroke-width="1.2"/></svg>
<div class="t sb" style="left:751px;top:277.54px;font-size:10.47px;color:#333;">Sort by: Relevance</div>
<svg class="a" style="left:844px;top:280px" width="7" height="5" viewBox="0 0 7 5"><path d="M0.5 0.8 H6.5 L3.5 4 Z" fill="#333"/></svg>
<svg class="a" style="left:879.5px;top:279.5px" width="5" height="7" viewBox="0 0 5 7"><path d="M3.6 0.8 L1.2 3.5 L3.6 6.2" fill="none" stroke="#5e33bf" stroke-width="1.1"/></svg>
<div class="t " style="left:911.8px;top:276.63px;font-size:10.6px;color:#333;">1</div>
<div class="a" style="left:896.5px;top:290px;width:35.5px;height:2px;background:#a6a6a6;border-radius:1px"></div>
<div class="t " style="left:933px;top:277.06px;font-size:10.8px;color:#333;">of 5</div>
<svg class="a" style="left:964px;top:279.5px" width="5" height="7" viewBox="0 0 5 7"><path d="M1.4 0.8 L3.8 3.5 L1.4 6.2" fill="none" stroke="#5e33bf" stroke-width="1.1"/></svg>
<div class="a" style="left:285px;top:313px;width:702px;height:177px;background:#fff;border-radius:3px;box-shadow:0 1px 2px rgba(0,0,0,0.13)"></div>
<div class="a" style="left:299px;top:335px;width:11px;height:11px;border:1.2px solid #6b6b6b;border-radius:1px;background:#fff"></div>
<div class="t " style="left:316.2px;top:334.69px;font-size:11px;color:#555;">1</div>
<div class="t pu" style="left:333px;top:333.71px;font-size:11.92px;">An <span class="hl">additive</span> <span class="hl">manufacturing</span>-based approach for carbon fiber reinforced <span class="hl">polymer</span> <span class="hl">recycling</span></div>
<div class="t " style="left:333px;top:361.22px;font-size:8.6px;color:#444;"><span class="u">Huang, HH</span>; <span class="u">Liu, WH</span> and <span class="u">Liu, ZF</span></div>
<div class="t " style="left:333px;top:380.32px;font-size:8.25px;color:#444;">2020 | <span class="u">CIRP ANNALS-MANUFACTURING TECHNOLOGY</span></div>
<div class="t " style="left:560.6px;top:380.50px;font-size:8.03px;color:#333;">69 (1) , pp.33-36</div>
<div class="t ab" style="left:333px;top:406.14px;font-size:8.93px;">The vast Carbon Fiber Reinforced</div>
<div class="t ab" style="left:469.9px;top:406.13px;font-size:8.94px;"><span class="hl2">Polymer</span> (CFRP) waste accumulated is pressing for its</div>
<div class="t ab" style="left:686.5px;top:405.91px;font-size:9.2px;"><span class="hl2">recycling</span>. A novel <span class="hl2">recycling</span> approach, which</div>
<div class="t ab" style="left:333px;top:420.43px;font-size:9.3px;">integrated carbon fiber reclamation and composite</div>
<div class="t ab" style="left:543.2px;top:420.26px;font-size:9.5px;"><span class="hl2">additive</span> <span class="hl2">manufacturing</span></div>
<div class="t ab" style="left:638.4px;top:420.75px;font-size:8.92px;">, is proposed to process the CFRP waste into three</div>
<div class="t ab" style="left:333px;top:434.70px;font-size:9.1px;">Dimensional (3D) parts. In the experiments, the CFRP waste was recycled by supercritical n-butanol to y&nbsp;...</div>
<div class="t pu" style="left:770px;top:434.20px;font-size:9.69px;">Show more</div>
<svg class="a" style="left:332.8px;top:455.6px" width="10.6" height="10.6" viewBox="0 0 10.6 10.6"><circle cx="5.3" cy="5.3" r="5.1" fill="#000"/><path d="M3.2 2.6 V6.6 C3.2 8 4.8 8.2 5.2 7.4" fill="none" stroke="#fff" stroke-width="1.5"/><path d="M6.1 2.6 V7.6 H8.2" fill="none" stroke="#f5e000" stroke-width="1.5"/></svg>
<div class="a" style="left:345.4px;top:458.1px;width:16.4px;height:2.3px;background:#6a6a6a"></div>
<div class="a" style="left:345.2px;top:461.5px;width:18px;height:2.2px;background:#7a7a7a"></div>
<div class="t pu" style="left:371px;top:457.01px;font-size:9.2px;"><span class="u">View full text</span></div>
<div class="a" style="left:434.5px;top:459.7px;width:3px;height:3px;border-radius:50%;background:#3d16b8"></div>
<div class="a" style="left:439px;top:459.7px;width:3px;height:3px;border-radius:50%;background:#3d16b8"></div>
<div class="a" style="left:443.5px;top:459.7px;width:3px;height:3px;border-radius:50%;background:#3d16b8"></div>
<div class="t pu" style="left:882.6px;top:332.07px;font-size:14.8px;">11</div>
<div class="t pu" style="left:882.6px;top:350.97px;font-size:9.25px;">Citations</div>
<div class="a" style="left:882px;top:362.5px;width:97px;height:1px;background:#cfcfcf"></div>
<div class="t pu" style="left:882.6px;top:372.87px;font-size:14.8px;">12</div>
<div class="t pu" style="left:882.6px;top:391.95px;font-size:8.68px;">References</div>
<div class="a" style="left:882px;top:454.5px;width:97px;height:1px;background:#cfcfcf"></div>
<div class="t pu" style="left:882.6px;top:458.40px;font-size:8.98px;"><span class="u">Related records</span></div>
<div class="a" style="left:285px;top:497px;width:702px;height:120px;background:#fff;border-radius:3px;box-shadow:0 1px 2px rgba(0,0,0,0.13)"></div>
<div class="a" style="left:299px;top:519px;width:11px;height:11px;border:1.2px solid #6b6b6b;border-radius:1px;background:#fff"></div>
<div class="t " style="left:316.2px;top:518.69px;font-size:11px;color:#555;">2</div>
<div class="t pu" style="left:333px;top:517.40px;font-size:12.05px;">Integrating carbon fiber reclamation and <span class="hl">additive</span> <span class="hl">manufacturing</span> for</div>
<div class="t " style="left:333px;top:544.79px;font-size:8.52px;color:#444;"><span class="u">Liu, WH</span>; <span class="u">Huang, HH</span>; (...); <span class="u">Liu, ZF</span></div>
<div class="t pu" style="left:882.6px;top:515.47px;font-size:14.8px;">13</div>
<div class="t pu" style="left:882.6px;top:534.77px;font-size:9.25px;">Citations</div>
<div class="a" style="left:882px;top:546.5px;width:97px;height:1px;background:#cfcfcf"></div>
<div class="t pu" style="left:882.6px;top:556.47px;font-size:14.8px;">12</div>
<svg class="a" style="left:17px;top:86px" width="10" height="8" viewBox="0 0 10 8"><path d="M1 0.8 L4.6 4 L1 7.2" fill="none" stroke="#fff" stroke-width="1.6"/><path d="M8.3 0.5 V7.5" stroke="#fff" stroke-width="1.6"/></svg>
<div class="t b" style="left:14.6px;top:100.80px;font-size:5.2px;color:#fff;letter-spacing:-0.15px">MENU</div>
<svg class="a" style="left:12.8px;top:125px" width="17.6" height="17.6" viewBox="0 0 24 24"><path d="M9.17 6l2 2H20v10H4V6h5.17M10 4H4c-1.1 0-1.99.9-1.99 2L2 18c0 1.1.9 2 2 2h16c1.1 0 2-.9 2-2V8c0-1.1-.9-2-2-2h-8l-2-2z" fill="#fff"/></svg>
<svg class="a" style="left:13.9px;top:164.5px" width="16.8" height="16.8" viewBox="0 0 24 24"><path d="M13 3a9 9 0 0 0-9 9H1l3.89 3.89.07.14L9 12H6c0-3.87 3.13-7 7-7s7 3.13 7 7-3.13 7-7 7c-1.93 0-3.68-.79-4.94-2.06l-1.42 1.42A8.954 8.954 0 0 0 13 21a9 9 0 0 0 0-18zm-1 5v5l4.28 2.54.72-1.21-3.5-2.08V8H12z" fill="#fff"/></svg>
<svg class="a" style="left:13.2px;top:204.2px" width="17.3" height="17.3" viewBox="0 0 24 24"><path d="M12 2C6.48 2 2 6.48 2 12s4.48 10 10 10 10-4.48 10-10S17.52 2 12 2zm0 3c1.66 0 3 1.340 3 3s-1.34 3-3 3-3-1.34-3-3 1.34-3 3-3zm0 14.2c-2.5 0-4.71-1.28-6-3.22.03-1.99 4-3.08 6-3.08 1.99 0 5.970 1.09 6 3.08-1.29 1.94-3.5 3.22-6 3.22z" fill="#fff"/></svg>
<svg class="a" style="left:13.1px;top:242.2px" width="17.5" height="17.5" viewBox="0 0 24 24"><path d="M12 22c1.1 0 2-.9 2-2h-4c0 1.1.89 2 2 2zm6-6v-5c0-3.07-1.64-5.64-4.5-6.32V4c0-.83-.67-1.5-1.5-1.5s-1.5.67-1.5 1.5v.68C7.63 5.36 6 7.92 6 11v5l-2 2v1h16v-1l-2-2z" fill="#fff"/></svg>
<div class="a" style="left:0px;top:559px;width:1000px;height:27px;background:#2e3140"></div>
<div class="a" style="left:5px;top:559px;width:1px;height:27px;background:#383b49"></div>
<div class="a" style="left:165px;top:563px;width:1px;height:23px;background:#5a5d6a"></div>
<svg class="a" style="left:15px;top:575.5px" width="9" height="11" viewBox="0 0 9 11"><path d="M0.5 0.5 H5.5 L8.5 3.5 V11 H0.5 Z" fill="#d8d8dc"/><path d="M5.5 0.5 V3.5 H8.5" fill="#a9aab0"/></svg>
<div class="t sb" style="left:34.2px;top:576.96px;font-size:9.85px;color:#f0f0f2;-webkit-text-stroke:0.3px #f0f0f2">savedrecs.txt</div>
<svg class="a" style="left:145px;top:578.5px" width="8" height="5" viewBox="0 0 8 5"><path d="M1 4.2 L4 1.2 L7 4.2" fill="none" stroke="#e8e8ec" stroke-width="1.4"/></svg>
<div class="a" style="left:909px;top:570px;width:74.5px;height:26px;border:1px solid #8d8f9a;border-radius:12px"></div>
<div class="t sb" style="left:920.5px;top:577.65px;font-size:9.39px;color:#f4f4f6;-webkit-text-stroke:0.45px #f4f4f6">Tout afficher</div>
<svg class="a" style="left:991.5px;top:578px" width="9" height="9" viewBox="0 0 9 9"><path d="M1 1 L8 8 M8 1 L1 8" stroke="#e8e8ec" stroke-width="1.6"/></svg>
</body></html>
